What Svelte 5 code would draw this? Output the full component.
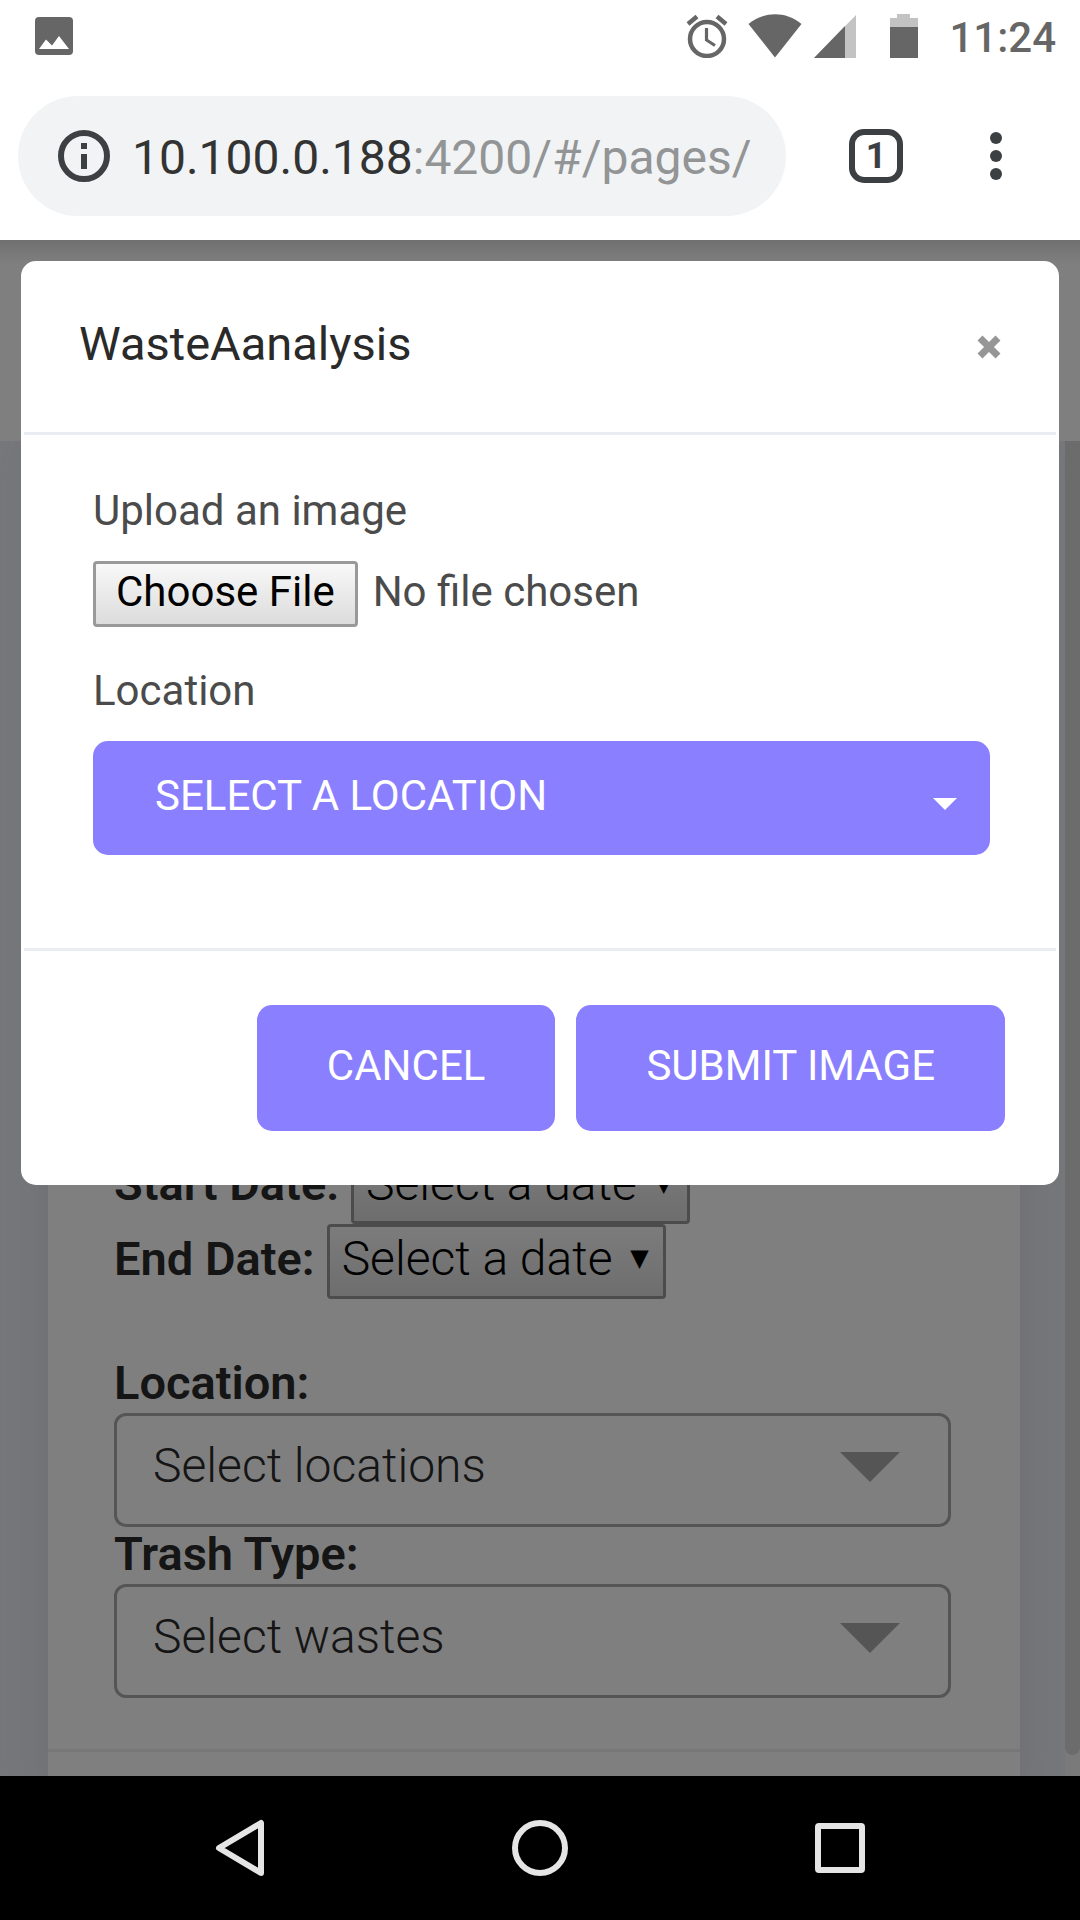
<script lang="ts">
  let open = true;
  let location = "";
  let files: FileList | null = null;

  const locations = ["Cafeteria", "Library", "Main Hall"];
  const wastes = ["Plastic", "Paper", "Organic"];

  function close() {
    open = false;
  }

  function submitImage() {
    if (!files?.length) {
      console.warn("No file selected");
      return;
    }
    close();
  }
</script>

<div class="device">
  <div class="status-bar">
    <svg width="38" height="38" viewBox="0 0 38 38">
      <rect width="38" height="38" rx="4" fill="#666" />
      <path d="M4 32 L11 22.500 L17 28.500 L24 19 L34 32 Z" fill="#fff" />
    </svg>
    <div class="status-icons">
      <svg class="alarm" width="42" height="44" viewBox="0 0 42 44" fill="none" stroke="#666">
        <circle cx="21" cy="25" r="17" stroke-width="4.500" />
        <path d="M20.500 14 V26 L29 31.500" stroke-width="3.200" />
        <path d="M2 10 L11 2.500 M40 10 L31 2.500" stroke-width="4.500" />
      </svg>
      <svg class="wifi" width="54" height="44" viewBox="0 0 54 44">
        <path d="M27 43.500 L0.500 10 C16 -3 38 -3 53.500 10 Z" fill="#666" />
      </svg>
      <svg class="signal" width="42" height="44" viewBox="0 0 42 44">
        <path d="M0 44 L42 1 V44 Z" fill="#c3c3c3" />
        <path d="M0 44 L31 12 V44 Z" fill="#666" />
      </svg>
      <svg class="battery" width="28" height="44" viewBox="0 0 28 44">
        <path d="M0 4 H7 V0 H20 V4 H28 V14 H0 Z" fill="#c3c3c3" />
        <rect y="13" width="28" height="31" fill="#666" />
      </svg>
      <span class="time">11:24</span>
    </div>
  </div>

  <div class="toolbar">
    <button class="omnibox">
      <svg width="52" height="52" viewBox="0 0 52 52">
        <circle cx="26" cy="26" r="23" fill="none" stroke="#3c4043" stroke-width="6" />
        <path d="M23 13 h6 v6 h-6 Z M23 24 h6 v15 h-6 Z" fill="#3c4043" />
      </svg>
      <span class="url"><span class="host">10.100.0.188</span>:4200/#/pages/</span>
    </button>
    <button class="tabs">1</button>
    <button class="more" aria-label="More">
      <svg width="12" height="48" viewBox="0 0 12 48" fill="#3c4043">
        <circle cx="6" cy="6" r="6" />
        <circle cx="6" cy="24" r="6" />
        <circle cx="6" cy="42" r="6" />
      </svg>
    </button>
  </div>

  <div class="viewport">
    <div class="page-header"></div>
    <div class="page-body">
      <div class="card">
        <div class="filters">
          <div class="date-row">
            <label for="start-date">Start Date:</label>
            <span class="date-select">
              <select id="start-date"><option>Select a date</option></select>
              <span class="glyph">▼</span>
            </span>
          </div>
          <div class="date-row">
            <label for="end-date">End Date:</label>
            <span class="date-select">
              <select id="end-date"><option>Select a date</option></select>
              <span class="glyph">▼</span>
            </span>
          </div>
          <label class="field-label spaced" for="filter-location">Location:</label>
          <div class="multi-select">
            <select id="filter-location">
              <option>Select locations</option>
              {#each locations as item}
                <option>{item}</option>
              {/each}
            </select>
            <span class="triangle"></span>
          </div>
          <label class="field-label" for="filter-waste">Trash Type:</label>
          <div class="multi-select">
            <select id="filter-waste">
              <option>Select wastes</option>
              {#each wastes as item}
                <option>{item}</option>
              {/each}
            </select>
            <span class="triangle"></span>
          </div>
        </div>
        <div class="card-footer"></div>
      </div>
      <div class="scroll-track"><div class="scroll-thumb"></div></div>
    </div>

    {#if open}
      <div class="backdrop">
        <div class="modal" role="dialog" aria-labelledby="modal-title">
          <div class="modal-header">
            <h1 id="modal-title">WasteAanalysis</h1>
            <button class="close" aria-label="Close" on:click={close}>
              <svg width="24" height="24" viewBox="0 0 24 24">
                <path d="M3 3 L21 21 M21 3 L3 21" stroke="#969696" stroke-width="7" />
              </svg>
            </button>
          </div>
          <div class="modal-body">
            <label for="image">Upload an image</label>
            <input id="image" type="file" accept="image/*" bind:files />
            <label for="location">Location</label>
            <div class="location-select">
              <select id="location" bind:value={location}>
                <option value="">SELECT A LOCATION</option>
                {#each locations as item}
                  <option value={item}>{item}</option>
                {/each}
              </select>
              <span class="caret"></span>
            </div>
          </div>
          <div class="modal-footer">
            <button class="btn" on:click={close}>CANCEL</button>
            <button class="btn" on:click={submitImage}>SUBMIT IMAGE</button>
          </div>
        </div>
      </div>
    {/if}
  </div>

  <div class="nav-bar">
    <button aria-label="Back">
      <svg width="60" height="60" viewBox="0 0 60 60">
        <path d="M9 30 L51 5 V55 Z" />
      </svg>
    </button>
    <button aria-label="Home">
      <svg width="60" height="60" viewBox="0 0 60 60">
        <circle cx="30" cy="30" r="25" />
      </svg>
    </button>
    <button aria-label="Overview">
      <svg width="60" height="60" viewBox="0 0 60 60">
        <rect x="8" y="8" width="44" height="44" rx="1" />
      </svg>
    </button>
  </div>
</div>

<style>
  :global(body) {
    background: #fff;
  }

  .device {
    display: flex;
    flex-direction: column;
    height: 100vh;
    font-family: Roboto, sans-serif;
  }

  svg {
    display: block;
    flex: none;
  }

  button,
  select,
  input {
    margin: 0;
    padding: 0;
    border: 0;
    background: none;
    font-family: inherit;
  }

  select {
    appearance: none;
  }

  /* system bar and browser chrome */
  .status-bar {
    display: flex;
    justify-content: space-between;
    align-items: center;
    height: 72px;
    padding: 0 24px 0 35px;
    flex: none;
  }

  .status-icons {
    display: flex;
    align-items: center;
  }

  .wifi {
    margin-left: 20px;
  }

  .signal {
    margin-left: 12px;
  }

  .battery {
    margin: 0 31px 0 34px;
  }

  .time {
    padding-top: 3px;
    color: #666;
    font-size: 42px;
    font-weight: 500;
    line-height: 48px;
  }

  .toolbar {
    display: flex;
    align-items: center;
    height: 168px;
    padding: 0 78px 0 18px;
    box-sizing: border-box;
    flex: none;
  }

  .omnibox {
    display: flex;
    align-items: center;
    gap: 22px;
    flex: 1;
    min-width: 0;
    height: 120px;
    padding: 0 32px 0 40px;
    border-radius: 60px;
    background: #f1f3f4;
  }

  .url {
    overflow: hidden;
    padding-top: 3px;
    color: #929496;
    font-size: 48px;
    line-height: 60px;
    white-space: nowrap;
  }

  .host {
    color: #333;
  }

  .tabs {
    width: 54px;
    height: 54px;
    margin: 0 87px 0 63px;
    border: 6px solid #3c4043;
    border-radius: 15px;
    color: #3c4043;
    font-size: 36px;
    font-weight: 700;
    line-height: 42px;
  }

  /* page behind the dialog */
  .viewport {
    position: relative;
    display: flex;
    flex-direction: column;
    flex: 1;
    min-height: 0;
    overflow: hidden;
  }

  .page-header {
    height: 201px;
    flex: none;
    background: #fff;
  }

  .page-body {
    display: flex;
    flex: 1;
    min-height: 0;
    background: #ebeef5;
  }

  .card {
    display: flex;
    flex-direction: column;
    justify-content: flex-end;
    flex: 1;
    margin: 0 45px 0 48px;
    background: #fff;
    box-shadow: 0 12px 42px rgba(174, 178, 193, 0.3);
  }

  .filters {
    padding: 0 69px 51px 66px;
    color: #2a2a2a;
    font-size: 48px;
    line-height: 57px;
  }

  .filters label {
    font-size: 47px;
    font-weight: 600;
  }

  .date-row {
    display: flex;
    align-items: center;
    gap: 12px;
    height: 75px;
  }

  .date-row label {
    padding-bottom: 6px;
  }

  .date-select {
    position: relative;
  }

  .date-select select {
    display: block;
    width: 339px;
    height: 75px;
    padding: 0 0 6px 12px;
    border: 3px solid #999;
    border-radius: 4px;
    background: linear-gradient(#f8f8f8, #dcdcdc);
    color: #000;
    font-size: 48px;
    font-weight: 300;
  }

  .glyph {
    position: absolute;
    top: 6px;
    right: 17px;
    color: #000;
    font-family: "DejaVu Sans", sans-serif;
    font-size: 24px;
    pointer-events: none;
  }

  .field-label {
    display: block;
    height: 57px;
    line-height: 53px;
  }

  .spaced {
    margin-top: 57px;
  }

  .multi-select {
    position: relative;
  }

  .multi-select select {
    display: block;
    width: 100%;
    height: 114px;
    padding: 0 120px 10px 36px;
    border: 3px solid #aaa;
    border-radius: 12px;
    color: #2a2a2a;
    font-size: 48px;
    font-weight: 300;
  }

  .triangle {
    position: absolute;
    top: 39px;
    right: 51px;
    border: 30px solid transparent;
    border-top-color: #aaa;
    border-bottom: 0;
    pointer-events: none;
  }

  .card-footer {
    height: 24px;
    flex: none;
    border-top: 3px solid #eee;
  }

  .scroll-track {
    width: 15px;
    padding-bottom: 21px;
    background: #f5f5f5;
  }

  .scroll-thumb {
    height: 100%;
    border-radius: 0 0 8px 8px;
    background: #d9d9d9;
  }

  .backdrop {
    position: absolute;
    inset: 0;
    padding: 21px;
    background:
      linear-gradient(rgba(0, 0, 0, 0.12), transparent 24px),
      rgba(0, 0, 0, 0.5);
  }

  /* dialog */
  .modal {
    border: 3px solid #fff;
    border-radius: 15px;
    background: #fff;
  }

  .modal-header {
    display: flex;
    justify-content: space-between;
    align-items: center;
    height: 165px;
    padding: 0 55px 3px;
    border-bottom: 3px solid #e9edf2;
  }

  h1 {
    margin: 0;
    padding-bottom: 6px;
    color: #2a2a2a;
    font-size: 47px;
    font-weight: 400;
    line-height: 60px;
  }

  .modal-body {
    display: flex;
    flex-direction: column;
    padding: 48px 66px 93px 69px;
    color: #4b4b4b;
    font-size: 42px;
  }

  .modal-body label {
    line-height: 56px;
  }

  input[type="file"] {
    height: 66px;
    margin: 22px 0 36px;
    color: #4b4b4b;
    font-size: 42px;
    line-height: 48px;
  }

  input[type="file"]::file-selector-button {
    height: 66px;
    margin: 0 15px 0 0;
    padding: 0 20px 6px;
    border: 3px solid #999;
    border-radius: 4px;
    background: linear-gradient(#f8f8f8, #dcdcdc);
    color: #000;
    font-family: inherit;
    font-size: 42px;
  }

  .location-select {
    position: relative;
    margin-top: 22px;
  }

  .location-select select {
    display: block;
    width: 100%;
    height: 114px;
    padding: 0 90px 6px 62px;
    border-radius: 15px;
    background: #8a7fff;
    color: #fff;
    font-size: 42px;
  }

  .caret {
    position: absolute;
    top: 57px;
    right: 33px;
    border: 12px solid transparent;
    border-top-color: #fff;
    border-bottom: 0;
    pointer-events: none;
  }

  .modal-footer {
    display: flex;
    justify-content: flex-end;
    gap: 21px;
    padding: 54px 51px 51px;
    border-top: 3px solid #e9edf2;
  }

  .btn {
    height: 126px;
    padding: 0 70px 6px;
    border-radius: 15px;
    background: #8a7fff;
    color: #fff;
    font-size: 42px;
  }

  .nav-bar {
    display: flex;
    height: 144px;
    padding: 0 90px;
    flex: none;
    background: #000;
  }

  .nav-bar button {
    display: flex;
    justify-content: center;
    align-items: center;
    flex: 1;
  }

  .nav-bar svg {
    fill: none;
    stroke: #e5e5e5;
    stroke-width: 6;
    stroke-linejoin: round;
  }
</style>
